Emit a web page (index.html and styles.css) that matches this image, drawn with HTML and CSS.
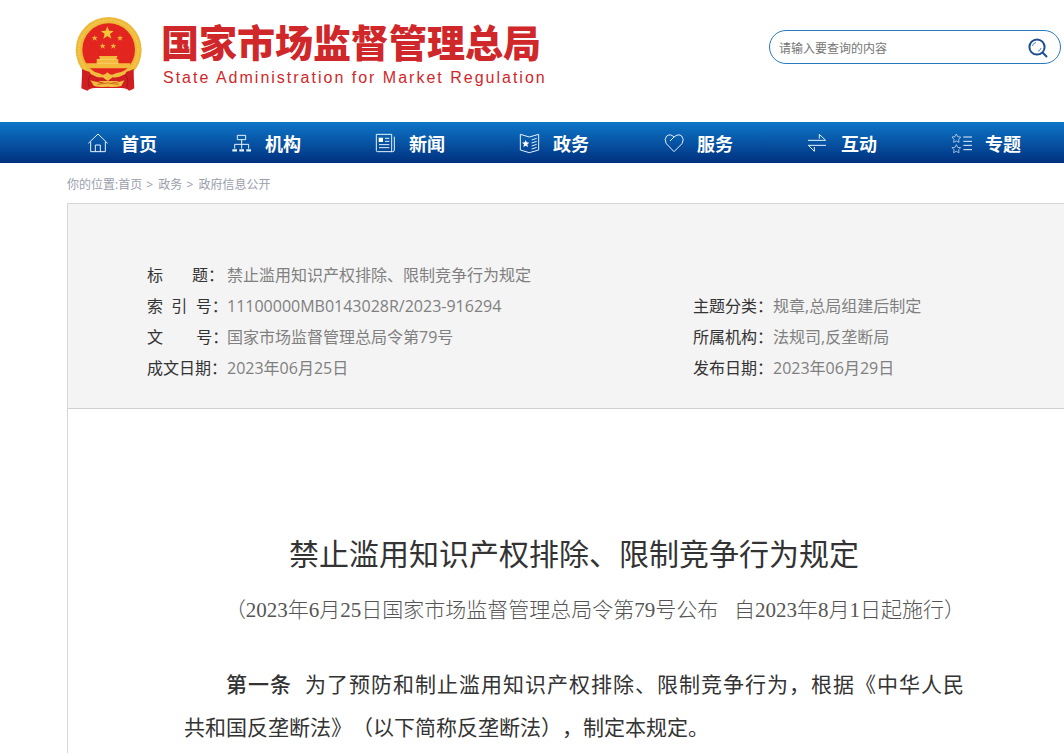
FILE: index.html
```html
<!DOCTYPE html>
<html lang="zh-CN">
<head>
<meta charset="utf-8">
<meta name="viewport" content="width=device-width, initial-scale=1">
<title>禁止滥用知识产权排除、限制竞争行为规定</title>
<link rel="stylesheet" href="styles.css">
</head>
<body>
<header class="site-header">
  <a class="brand" href="#">
    <svg class="emblem" viewBox="39 33 210 225" aria-hidden="true">
      <path d="M67 190 L64 250 Q75 256 83 257 Q90 249 105 249 L184 249 Q200 249 207 257 Q215 255 223 250 L220 190Z" fill="#cf1f22"/>
      <circle cx="146" cy="135" r="99" fill="#edb93a"/>
      <circle cx="146" cy="135" r="89" fill="none" stroke="#f3c94c" stroke-width="7" stroke-dasharray="5 3"/>
      <circle cx="146" cy="134" r="79" fill="#e3251f"/>
      <path d="M142 64 l5 13 14 1 -11 9 4 14 -12 -8 -12 8 4 -14 -11 -9 14 -1Z" fill="#f5c63c"/>
      <g fill="#f2b53a">
        <path id="star" d="M104 90 l2 6 7 0 -5 4 2 7 -6 -4 -6 4 2 -7 -5 -4 7 0Z"/>
        <use href="#star" x="76"/>
        <use href="#star" x="24" y="24"/>
        <use href="#star" x="56" y="24"/>
      </g>
      <path d="M117 153 L173 153 L169 162 L175 162 L175 175 L211 175 L211 190 L79 190 L79 175 L110 175 L110 162 L120 162Z" fill="#f2b93b"/>
      <path d="M117 163H169M112 175H176" stroke="#f9dc83" stroke-width="2"/>
      <path d="M66 192 Q92 205 119 204 Q128 212 143 203 Q158 212 168 204 Q196 205 221 192 L219 222 Q201 222 188 228 L101 228 Q88 222 68 222Z" fill="#cf1f22"/>
      <path d="M85 193 Q104 203 118 205 Q132 215 142 202 Q153 215 167 205 Q184 203 202 193 L196 207 Q172 220 158 217 L143 228 L128 217 Q111 219 92 207Z" fill="#f2bd3c"/>
      <path d="M91 226 Q114 232 127 235 Q143 223 159 235 Q176 232 193 226 L184 243 Q166 248 143 245 Q117 248 102 243Z" fill="#f2bd3c"/>
      <path d="M112 238 Q143 230 176 238" fill="none" stroke="#b93e1c" stroke-width="2"/>
      <path d="M92 211 Q80 222 88 248 M196 211 Q209 222 200 248" fill="none" stroke="#a9151a" stroke-width="3"/>
    </svg>
    <span class="brand-text">
      <span class="brand-name">国家市场监督管理总局</span>
      <span class="brand-latin" lang="en">State Administration for Market Regulation</span>
    </span>
  </a>
  <form class="search" role="search">
    <input class="search-input" type="text" aria-label="查询内容" placeholder="请输入要查询的内容">
    <button class="search-button" type="button" aria-label="搜索">
      <svg viewBox="0 0 20 20" aria-hidden="true"><circle cx="9" cy="9" r="7.6"/><path d="M14.5 14.5L19 19"/><path class="thin" d="M4.5 8Q5 5 8 4.500M13 10Q12.500 12.500 10 13.300"/></svg>
    </button>
  </form>
</header>

<nav class="main-nav" aria-label="主导航">
  <a href="#"><svg viewBox="264 54 60 60" aria-hidden="true"><path d="M265 85L294 57L323 85M272 80V110H316V80M286 110V90H301V110"/></svg>首页</a>
  <a href="#"><svg viewBox="696 54 60 60" aria-hidden="true"><path d="M712 61H737V74H712ZM725 74V101M704 101V88H746V101"/><path class="thick" d="M697 106H711M718 106H732M739 106H753"/></svg>机构</a>
  <a href="#"><svg viewBox="168 54 60 60" aria-hidden="true"><path d="M169 58H215V110H172Q169 110 169 107ZM223 65V105Q223 110 218 110H213M195 70H208M195 79H208M177 89H208M177 98H208"/><path class="solid" d="M176 68H189V81H176Z"/></svg>新闻</a>
  <a href="#"><svg viewBox="600 54 60 60" aria-hidden="true"><path d="M601 58L628 66L656 58V105L628 113L601 105ZM635 75L650 70M635 84L650 79M635 93L650 88M635 102L650 97"/><path class="solid" d="M617 75l3 7 8 1-6 5 2 8-7-4-7 4 2-8-6-5 8-1Z"/></svg>政务</a>
  <a href="#"><svg viewBox="72 54 60 60" aria-hidden="true"><path d="M102 110L79 86Q71 73 80 63Q91 55 102 66Q115 55 125 63Q134 73 126 86ZM102 66L90 78"/></svg>服务</a>
  <a href="#"><svg viewBox="504 54 60 60" aria-hidden="true"><path d="M504 76H557L538 58V71M558 91H505L523 109V96"/></svg>互动</a>
  <a href="#"><svg viewBox="936 54 60 60" aria-hidden="true"><path d="M970 66H996M970 79H996M970 91H996M970 104H996"/><path class="fine" d="M949 57l4 8 9 1-6 7 1 9-8-4-8 4 1-9-6-7 9-1ZM949 89l4 8 9 1-6 6 1 9-8-4-8 4 1-9-6-6 9-1Z"/></svg>专题</a>
</nav>

<div class="page">
  <nav class="breadcrumb" aria-label="你的位置">你的位置:<a href="#">首页</a> <span class="separator">&gt;</span> <a href="#">政务</a> <span class="separator">&gt;</span> <a href="#">政府信息公开</a></nav>
  <main class="document">
    <dl class="info">
      <div class="info-row wide"><dt>标&nbsp;&nbsp;&nbsp;&nbsp;&nbsp;&nbsp;&nbsp;题：</dt><dd>禁止滥用知识产权排除、限制竞争行为规定</dd></div>
      <div class="info-row"><dt>索&nbsp;&nbsp;引&nbsp;&nbsp;号：</dt><dd>11100000MB0143028R/2023-916294</dd></div>
      <div class="info-row"><dt>主题分类：</dt><dd>规章,总局组建后制定</dd></div>
      <div class="info-row"><dt>文&nbsp;&nbsp;&nbsp;&nbsp;&nbsp;&nbsp;&nbsp;&nbsp;号：</dt><dd>国家市场监督管理总局令第79号</dd></div>
      <div class="info-row"><dt>所属机构：</dt><dd>法规司,反垄断局</dd></div>
      <div class="info-row"><dt>成文日期：</dt><dd>2023年06月25日</dd></div>
      <div class="info-row"><dt>发布日期：</dt><dd>2023年06月29日</dd></div>
    </dl>
    <article class="article">
      <h1>禁止滥用知识产权排除、限制竞争行为规定</h1>
      <p class="issued">（2023年6月25日国家市场监督管理总局令第79号公布&nbsp;&nbsp; 自2023年8月1日起施行）</p>
      <p class="clause"><span class="clause-number">第一条</span>&nbsp; 为了预防和制止滥用知识产权排除、限制竞争行为，根据《中华人民<span class="keep">共和国</span>反垄断法》（以下简称反垄断法），制定本规定。</p>
    </article>
  </main>
</div>
</body>
</html>
```
FILE: styles.css
```css
* {
  box-sizing: border-box;
}

body {
  margin: 0;
  background: #fff;
  color: #333;
  font-family: "Open Sans", "Noto Sans CJK SC", sans-serif;
  font-size: 16px;
  text-spacing-trim: space-all;
}

a {
  color: inherit;
  text-decoration: none;
}

.site-header {
  display: flex;
  justify-content: space-between;
  align-items: flex-start;
  padding: 16px 3px 0 73px;
  height: 122px;
}

.brand {
  display: flex;
  gap: 18px;
}

.emblem {
  width: 70px;
  height: 75px;
}

.brand-text {
  display: flex;
  flex-direction: column;
  gap: 4px;
  padding-top: 3px;
  color: #d0282a;
  white-space: nowrap;
}

.brand-name {
  font-family: "Noto Sans CJK SC", sans-serif;
  font-size: 38px;
  font-weight: 900;
  line-height: 44px;
}

.brand-latin {
  padding-left: 2px;
  font-family: "Liberation Sans", sans-serif;
  font-size: 16px;
  line-height: 22px;
  letter-spacing: 2px;
}

.search {
  display: flex;
  align-items: center;
  width: 292px;
  height: 34px;
  margin-top: 14px;
  padding: 0 12px 0 9px;
  border: 1px solid #2a78bd;
  border-radius: 17px;
}

.search-input {
  flex: 1;
  min-width: 0;
  padding: 2px 0 0;
  border: 0;
  outline: 0;
  background: none;
  font-family: inherit;
  font-size: 12px;
}

.search-input::placeholder {
  color: #757575;
}

.search-button {
  display: flex;
  padding: 2px 0 0;
  border: 0;
  background: none;
}

.search-button svg {
  width: 20px;
  height: 20px;
  fill: none;
  stroke: #1d4f8f;
  stroke-width: 2;
}

.search-button .thin {
  stroke: #4b8ac4;
  stroke-width: 1;
}

.main-nav {
  display: flex;
  justify-content: space-between;
  align-items: center;
  height: 41px;
  padding: 0 43px 0 88px;
  background: linear-gradient(#0e76c8, #00317f);
  color: #fff;
  font-size: 18px;
  font-weight: 700;
}

.main-nav a {
  display: flex;
  align-items: center;
  gap: 13px;
  white-space: nowrap;
}

.main-nav svg {
  width: 20px;
  height: 20px;
  overflow: visible;
  fill: none;
  stroke: #e6f3ff;
  stroke-width: 3;
}

.main-nav .thick {
  stroke-width: 7;
}

.main-nav .fine {
  stroke-width: 2;
}

.main-nav .solid {
  fill: #fff;
  stroke: none;
}

.page {
  display: flex;
  flex-direction: column;
  min-height: calc(100vh - 163px);
  padding-left: 67px;
}

.breadcrumb {
  height: 40px;
  color: #9a9eac;
  font-size: 12px;
  line-height: 44px;
}

.separator {
  margin: 0 2px 0 1px;
}

.document {
  flex: 1;
  border-top: 1px solid #d5d5dd;
  border-left: 1px solid #d5d5dd;
}

.info {
  display: grid;
  grid-template-columns: 3fr 2fr;
  margin: 0;
  padding: 56px 7px 24px 79px;
  border-bottom: 1px solid #d0d0d0;
  background: #f4f4f4;
  line-height: 31px;
}

.info-row {
  display: flex;
}

.wide {
  grid-column: 1 / -1;
}

.info dt {
  width: 80px;
  flex: none;
  white-space: nowrap;
}

.info dd {
  margin: 0;
  color: #808080;
}

.article {
  padding: 115px 100px 0 116px;
}

.article h1 {
  margin: 0;
  font-size: 30px;
  font-weight: 400;
  line-height: 60px;
  text-align: center;
}

.issued {
  margin: 0 -40px 27px;
  color: #555;
  font-family: "Liberation Serif", "Noto Sans CJK SC", serif;
  font-size: 21px;
  font-weight: 300;
  line-height: 52px;
  text-align: center;
  text-indent: 2em;
}

.clause {
  margin: 0;
  font-size: 21px;
  line-height: 43px;
  text-align: justify;
  text-indent: 2em;
}

.clause-number {
  font-weight: 500;
}

.keep {
  white-space: nowrap;
}
```
